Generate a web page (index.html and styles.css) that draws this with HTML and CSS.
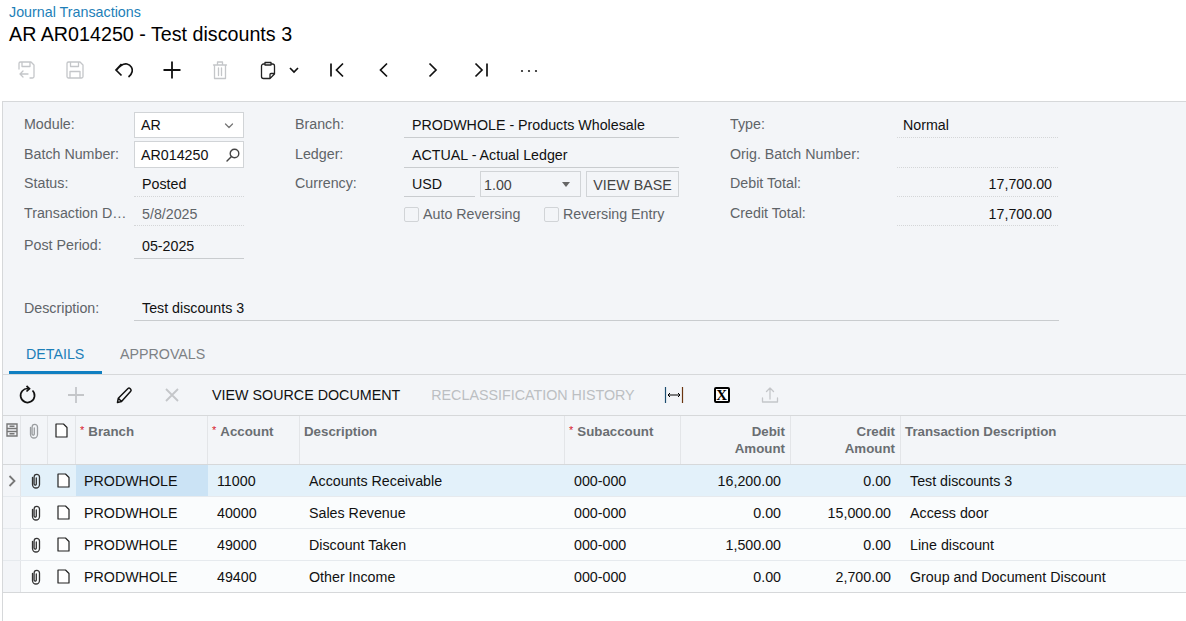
FILE: index.html
```html
<!DOCTYPE html>
<html lang="en">
<head>
<meta charset="utf-8">
<title>Journal Transactions</title>
<link rel="stylesheet" href="styles.css">
</head>
<body>
<header class="head">
  <a class="crumb">Journal Transactions</a>
  <h1 class="title">AR AR014250 - Test discounts 3</h1>
</header>
<nav class="maintools">
  <span class="mt w-1"><svg width="20" height="20" viewBox="0 0 20 20" class="ico dis"><path d="M2 9V3.500A1.500 1.500 0 0 1 3.500 2H14l3 3v11.500a1.500 1.500 0 0 1-1.500 1.500H13M5 2v4.500h8V2M3 14h8M6 11l-3 3 3 3"/></svg></span>
  <span class="mt w-2"><svg width="20" height="20" viewBox="0 0 20 20" class="ico dis"><path d="M2 3.500A1.500 1.500 0 0 1 3.500 2H15l3 3v11.500a1.500 1.500 0 0 1-1.500 1.500h-13A1.500 1.500 0 0 1 2 16.500ZM5.500 2v4.500h8V2M5 18v-6.500h10V18"/></svg></span>
  <span class="mt w-3"><svg width="20" height="20" viewBox="0 0 20 20" class="ico nav"><path d="M8.500 4 3 10l5.500 5.500M3.500 10C7 5.500 11 3.500 14 4c4 .8 6 5 5 8-.5 2-2 4-3.500 5"/></svg></span>
  <span class="mt w-4"><svg width="20" height="20" viewBox="0 0 20 20" class="ico bold"><path d="M10 1.500v17M1.500 10h17"/></svg></span>
  <span class="mt w-5"><svg width="20" height="20" viewBox="0 0 20 20" class="ico dis"><path d="M3.500 5h13M7.500 5V2h5v3M4.500 5v13.500h11V5M8.500 8v7.500M11.500 8v7.500"/></svg></span>
  <span class="mt w-6"><svg width="20" height="20" viewBox="0 0 20 20" class="ico clipb"><path d="M7 4H5.500A2 2 0 0 0 3.500 6v10.500a2 2 0 0 0 2 2H12l4.500-4.500V6a2 2 0 0 0-2-2H13M7 5V2.500h6V5ZM16.500 13.500H13a1 1 0 0 0-1 1v4"/></svg></span>
  <span class="mt w-7"><svg width="10" height="10" viewBox="0 0 10 10" class="ico nav"><path d="M1 3 5 7l4-4"/></svg></span>
  <span class="mt w-8"><svg width="20" height="20" viewBox="0 0 20 20" class="ico nav"><path d="M4 3.500v13M16 3.500 9.500 10l6.500 6.500"/></svg></span>
  <span class="mt w-9"><svg width="20" height="20" viewBox="0 0 20 20" class="ico nav"><path d="M13 3.500 6.500 10l6.500 6.500"/></svg></span>
  <span class="mt w-9b"><svg width="20" height="20" viewBox="0 0 20 20" class="ico nav"><path d="M6.500 3.500 13 10l-6.500 6.500"/></svg></span>
  <span class="mt w-10"><svg width="20" height="20" viewBox="0 0 20 20" class="ico nav"><path d="M16 3.500v13M4.500 3.500 11 10l-6.500 6.500"/></svg></span>
  <span class="mt w-11"><svg width="20" height="20" viewBox="0 0 20 20" class="dots"><circle cx="3" cy="11" r="1.100"/><circle cx="10" cy="11" r="1.100"/><circle cx="17" cy="11" r="1.100"/></svg></span>
</nav>
<main class="panel">
  <section class="form">
    <div class="col col-a">
      <div class="row"><label class="lbl">Module:</label><div class="box sel">AR<svg width="10" height="10" viewBox="0 0 10 10" class="ico grey"><path d="M1.500 3 5 6.500 8.500 3"/></svg></div></div>
      <div class="row"><label class="lbl">Batch Number:</label><div class="box sel tall">AR014250<svg width="16" height="16" viewBox="0 0 16 16" class="ico dark"><circle cx="9.500" cy="6.500" r="4.300"/><path d="M6.500 9.500 2 14"/></svg></div></div>
      <div class="row"><label class="lbl">Status:</label><div class="val dot">Posted</div></div>
      <div class="row"><label class="lbl">Transaction D…</label><div class="val dot muted">5/8/2025</div></div>
      <div class="row"><label class="lbl">Post Period:</label><div class="val solid">05-2025</div></div>
    </div>
    <div class="col col-b">
      <div class="row"><label class="lbl">Branch:</label><div class="val solid grow">PRODWHOLE - Products Wholesale</div></div>
      <div class="row"><label class="lbl">Ledger:</label><div class="val solid grow">ACTUAL - Actual Ledger</div></div>
      <div class="row"><label class="lbl">Currency:</label>
        <div class="cury">
          <div class="val solid usd">USD</div>
          <div class="box rate">1.00<span class="caret"></span></div>
          <div class="box viewbase">VIEW BASE</div>
        </div>
      </div>
      <div class="row"><span class="lbl"></span>
        <div class="checks">
          <span class="chk chk-a"><i class="cb"></i>Auto Reversing</span>
          <span class="chk"><i class="cb"></i>Reversing Entry</span>
        </div>
      </div>
    </div>
    <div class="col col-c">
      <div class="row"><label class="lbl">Type:</label><div class="val dot grow">Normal</div></div>
      <div class="row"><label class="lbl">Orig. Batch Number:</label><div class="val dot grow"></div></div>
      <div class="row"><label class="lbl">Debit Total:</label><div class="val dot grow num">17,700.00</div></div>
      <div class="row"><label class="lbl">Credit Total:</label><div class="val dot grow num">17,700.00</div></div>
    </div>
  </section>
  <div class="descrow"><label class="lbl">Description:</label><div class="val solid grow">Test discounts 3</div></div>
  <div class="tabs"><span class="tab active">DETAILS</span><span class="tab">APPROVALS</span></div>
  <div class="gridtools">
    <span class="gt g1"><svg width="20" height="20" viewBox="0 0 20 20" class="ico nav"><path d="M14.500 5.500A7 7 0 1 1 10 3.500M8.500 1l3 2.700-3 2.800"/></svg></span>
    <span class="gt g2"><svg width="20" height="20" viewBox="0 0 20 20" class="ico dis thick"><path d="M10 2v16M2 10h16"/></svg></span>
    <span class="gt g3"><svg width="20" height="20" viewBox="0 0 20 20" class="ico pen"><path d="M3.500 17.500l.8-4.300L14 3.500a1.500 1.500 0 0 1 2 0l.7.7a1.500 1.500 0 0 1 0 2L7.500 16.500ZM4.300 13.200l3.200 3.300"/></svg></span>
    <span class="gt g4"><svg width="20" height="20" viewBox="0 0 20 20" class="ico dis thick"><path d="M4 4l12 12M16 4 4 16"/></svg></span>
    <span class="gt g5">VIEW SOURCE DOCUMENT</span>
    <span class="gt g6">RECLASSIFICATION HISTORY</span>
    <span class="gt g7"><svg width="20" height="20" viewBox="0 0 20 20"><path d="M1.500 2v16" stroke="#1c4d70" stroke-width="1.200" fill="none"/><path d="M18.500 2v16" stroke="#6b3510" stroke-width="1.200" fill="none"/><path d="M4 10h12M6 8l-2 2 2 2M14 8l2 2-2 2" stroke="#000" fill="none"/></svg></span>
    <span class="gt g8 xl">X</span>
    <span class="gt g9"><svg width="20" height="20" viewBox="0 0 20 20" class="ico dis"><path d="M10 14V3M6.500 6.500 10 3l3.500 3.500M2.500 13v4h15v-4"/></svg></span>
  </div>
  <div class="grid">
    <div class="tr th">
      <div class="c c0"><svg width="12" height="14" viewBox="0 0 12 14" class="thico"><path d="M1 1h10v12H1ZM1 5.500h10M1 8.500h10M3.500 3.200h5M3.500 10.800h5"/></svg></div>
      <div class="c c1"><svg width="12" height="16" viewBox="0 0 12 16" class="clip lite"><path d="M2.500 4.500v7a3.500 3.500 0 0 0 7 0V4a2.700 2.700 0 0 0-5.400 0v7a1.100 1.100 0 0 0 2.200 0V5"/></svg></div>
      <div class="c c2"><svg width="13" height="15" viewBox="0 0 13 15" class="pg"><path d="M1 1h7.500L12 4.500V14H1Z"/></svg></div>
      <div class="c c3"><b class="req">*</b>Branch</div>
      <div class="c c4"><b class="req">*</b>Account</div>
      <div class="c c5">Description</div>
      <div class="c c6"><b class="req">*</b>Subaccount</div>
      <div class="c c7 r">Debit<br>Amount</div>
      <div class="c c8 r">Credit<br>Amount</div>
      <div class="c c9">Transaction Description</div>
    </div>
    <div class="tr td sel-row">
      <div class="c c0"><svg width="8" height="12" viewBox="0 0 8 12" class="arrow"><path d="M1.500 1 6.500 6l-5 5"/></svg></div>
      <div class="c c1"><svg width="12" height="16" viewBox="0 0 12 16" class="clip"><path d="M2.500 4.500v7a3.500 3.500 0 0 0 7 0V4a2.700 2.700 0 0 0-5.400 0v7a1.100 1.100 0 0 0 2.200 0V5"/></svg></div>
      <div class="c c2"><svg width="13" height="15" viewBox="0 0 13 15" class="pg"><path d="M1 1h7.500L12 4.500V14H1Z"/></svg></div>
      <div class="c c3 cur">PRODWHOLE</div><div class="c c4">11000</div><div class="c c5">Accounts Receivable</div><div class="c c6">000-000</div><div class="c c7 r">16,200.00</div><div class="c c8 r">0.00</div><div class="c c9">Test discounts 3</div>
    </div>
    <div class="tr td">
      <div class="c c0"></div>
      <div class="c c1"><svg width="12" height="16" viewBox="0 0 12 16" class="clip"><path d="M2.500 4.500v7a3.500 3.500 0 0 0 7 0V4a2.700 2.700 0 0 0-5.400 0v7a1.100 1.100 0 0 0 2.200 0V5"/></svg></div>
      <div class="c c2"><svg width="13" height="15" viewBox="0 0 13 15" class="pg"><path d="M1 1h7.500L12 4.500V14H1Z"/></svg></div>
      <div class="c c3">PRODWHOLE</div><div class="c c4">40000</div><div class="c c5">Sales Revenue</div><div class="c c6">000-000</div><div class="c c7 r">0.00</div><div class="c c8 r">15,000.00</div><div class="c c9">Access door</div>
    </div>
    <div class="tr td">
      <div class="c c0"></div>
      <div class="c c1"><svg width="12" height="16" viewBox="0 0 12 16" class="clip"><path d="M2.500 4.500v7a3.500 3.500 0 0 0 7 0V4a2.700 2.700 0 0 0-5.400 0v7a1.100 1.100 0 0 0 2.200 0V5"/></svg></div>
      <div class="c c2"><svg width="13" height="15" viewBox="0 0 13 15" class="pg"><path d="M1 1h7.500L12 4.500V14H1Z"/></svg></div>
      <div class="c c3">PRODWHOLE</div><div class="c c4">49000</div><div class="c c5">Discount Taken</div><div class="c c6">000-000</div><div class="c c7 r">1,500.00</div><div class="c c8 r">0.00</div><div class="c c9">Line discount</div>
    </div>
    <div class="tr td last">
      <div class="c c0"></div>
      <div class="c c1"><svg width="12" height="16" viewBox="0 0 12 16" class="clip"><path d="M2.500 4.500v7a3.500 3.500 0 0 0 7 0V4a2.700 2.700 0 0 0-5.400 0v7a1.100 1.100 0 0 0 2.200 0V5"/></svg></div>
      <div class="c c2"><svg width="13" height="15" viewBox="0 0 13 15" class="pg"><path d="M1 1h7.500L12 4.500V14H1Z"/></svg></div>
      <div class="c c3">PRODWHOLE</div><div class="c c4">49400</div><div class="c c5">Other Income</div><div class="c c6">000-000</div><div class="c c7 r">0.00</div><div class="c c8 r">2,700.00</div><div class="c c9">Group and Document Discount</div>
    </div>
  </div>
</main>
</body>
</html>
```
FILE: styles.css
```css
* { box-sizing: border-box; }
html, body { margin: 0; height: 100%; overflow: hidden; }
body { background: #fff; color: #000; font: 14.25px/16px "Liberation Sans", Arial, sans-serif; width: 1186px; height: 621px; }

.head { padding: 4px 9px 0; height: 46px; }
.crumb { display: block; color: #1d7fb8; font-size: 14.3px; line-height: 16px; }
.title { margin: 2px 0 0; font-weight: 400; font-size: 19.7px; line-height: 24px; }

.maintools { display: flex; align-items: center; height: 55px; padding: 0 0 7px 17px; }
.mt { display: flex; align-items: center; justify-content: center; flex: none; width: 20px; }
.w-1 { margin-right: 28px; }
.w-2 { margin-right: 28px; }
.w-3 { margin-right: 29px; }
.w-4 { margin-right: 28px; }
.w-5 { margin-right: 28px; }
.w-6 { margin-right: 11px; }
.w-7 { width: 10px; margin-right: 28px; }
.w-8 { margin-right: 27px; }
.w-9 { margin-right: 29px; }
.w-9b { margin-right: 28px; }
.w-10 { margin-right: 28px; }

.ico { fill: none; stroke: #111; stroke-width: 1.300; stroke-linecap: round; stroke-linejoin: round; }
.ico.bold { stroke-width: 1.800; stroke-linecap: butt; }
.ico.nav { stroke-width: 1.700; stroke-linecap: butt; stroke-linejoin: miter; }
.ico.clipb { stroke: #222; stroke-width: 1.300; }
.ico.pen { stroke-width: 1.500; }
.ico.dis { stroke: #c4c6c9; stroke-width: 1.300; }
.ico.dis.thick { stroke-width: 1.800; stroke-linecap: butt; }
.ico.grey { stroke: #777; flex: none; }
.ico.dark { stroke: #444; stroke-width: 1.400; flex: none; }
.dots { fill: #222; }

.panel { margin-left: 2px; height: 520px; border-top: 1px solid #d6d8da; border-left: 1px solid #d6d8da; background: #f3f5f8; }

.form { display: flex; padding: 7px 0 0 21px; height: 195px; }
.col { display: grid; grid-template-rows: 29px 30px 29px 29px 33px; align-content: start; }
.col-a { width: 220px; margin-right: 51px; }
.col-b { width: 384px; margin-right: 51px; }
.col-c { width: 328px; }
.row { display: flex; align-items: flex-end; min-width: 0; }
.lbl { flex: none; width: 110px; color: #5f6468; line-height: 16px; padding-bottom: 6px; align-self: flex-end; white-space: nowrap; overflow: hidden; }
.row:nth-child(4) .lbl { padding-bottom: 5px; }
.col-b .lbl { width: 109px; }
.col-c .lbl { width: 167px; }
.val { width: 110px; height: 26px; padding: 5px 6px 0 8px; color: #111; white-space: nowrap; flex: none; }
.row:nth-child(4) .val { padding-top: 6px; }
.col-c .val { padding-left: 6px; padding-right: 6px; }
.val.grow { flex: 1; width: auto; min-width: 0; }
.val.muted { color: #5f6468; }
.val.dot { border-bottom: 1px dotted #d4d6d8; }
.val.solid { border-bottom: 1px solid #c9cccf; }
.val.num { text-align: right; }
.box { background: #fff; border: 1px solid #d1d4d7; height: 26px; padding: 4px 6px; color: #111; display: flex; justify-content: space-between; align-items: flex-start; flex: none; }
.sel { width: 110px; }
.sel .ico.grey { margin: 4px 3px 0 0; }
.sel.tall { height: 27px; padding: 5px 2px 0 6px; }

.cury { display: flex; align-items: flex-end; flex: 1; gap: 5px; }
.usd { width: 71px; }
.rate { width: 101px; background: transparent; color: #444; padding: 5px 6px 0 3px; }
.caret { width: 0; height: 0; border-left: 4px solid transparent; border-right: 4px solid transparent; border-top: 5px solid #666; margin: 5px 4px 0 0; }
.viewbase { width: 93px; background: transparent; color: #444; justify-content: center; padding: 5px 0 0; }
.checks { display: flex; height: 28px; padding-top: 8px; }
.chk { display: flex; align-items: center; height: 16px; color: #5f6468; }
.chk-a { width: 140px; }
.cb { width: 15px; height: 15px; border: 1px solid #d1d4d7; border-radius: 2px; background: #f3f5f8; margin-right: 4px; }

.descrow { display: flex; padding-left: 21px; width: 1056px; height: 24px; align-items: flex-end; }
.descrow .lbl { padding-bottom: 5px; }
.descrow .val { height: 24px; padding-top: 3px; }

.tabs { display: flex; height: 54px; padding: 19px 0 0 6px; border-bottom: 1px solid #d6d8da; }
.tab { display: block; padding: 6px 17px 0; height: 34px; color: #7d8185; }
.tab.active { color: #1d7fb8; border-bottom: 3px solid #0f7fc1; width: 93px; }
.tab + .tab { padding-left: 18px; }

.gridtools { display: flex; align-items: center; height: 41px; border-bottom: 1px solid #d6d8da; font-size: 14.3px; }
.gt { flex: none; display: flex; align-items: center; justify-content: center; color: #111; white-space: nowrap; }
.g1 { margin-left: 15px; width: 20px; }
.g2 { margin-left: 28px; width: 20px; }
.g3 { margin-left: 28px; width: 20px; }
.g4 { margin-left: 28px; width: 20px; }
.g5 { margin-left: 30px; }
.g6 { margin-left: 31px; color: #bcbfc2; }
.g7 { margin-left: 29px; width: 20px; }
.g8 { margin-left: 30px; }
.g9 { margin-left: 30px; width: 20px; }
.xl { width: 16px; height: 16px; border: 2px solid #000; border-radius: 2px; background: #fff; color: #000; font: 700 15px/12px "Liberation Serif", serif; }

.grid { background: #fff; height: 206px; }
.tr { display: grid; grid-template-columns: 18px 27px 28px 132px 92px 265px 116px 110px 110px 285px; width: 1183px; }
.c { min-width: 0; white-space: nowrap; overflow: hidden; }
.th { height: 49px; background: #f3f5f8; border-bottom: 1px solid #d6d8da; color: #6a6e72; font-weight: 700; font-size: 13.3px; line-height: 17px; }
.th .c { padding: 7px 5px 0 4px; border-right: 1px solid #e3e5e8; }
.th .c0, .th .c1, .th .c2 { padding: 7px 0 0; display: flex; justify-content: center; align-items: flex-start; }
.th .c9 { border-right: 0; }
.req { color: #d8162c; font-weight: 400; font-size: 11px; line-height: 0; margin-right: 4px; vertical-align: 2px; }
.td { height: 32px; background: #fafcfd; border-bottom: 1px solid #e6eaee; line-height: 32px; color: #111; }
.td.last { border-bottom: 1px solid #d6d8da; }
.td .c { padding-left: 9px; }
.td .c0 { background: #f3f5f8; padding: 0; border-right: 1px solid #e3e5e8; display: flex; justify-content: center; align-items: center; }
.td .c1, .td .c2 { padding: 0; display: flex; justify-content: center; align-items: center; }
.td .c1 { padding-left: 3px; }
.td .c2 { padding-left: 3px; }
.td .c3 { padding-left: 8px; }
.td .c7, .td .c8 { padding-left: 0; padding-right: 10px; }
.r { text-align: right; }
.sel-row { background: #e3f1fa; }
.sel-row .cur { background: #cbe3f5; }
.thico { fill: none; stroke: #777; stroke-width: 1.400; }
.pg { fill: #fff; stroke: #222; stroke-width: 1.200; stroke-linejoin: round; }
.clip { fill: none; stroke: #333; stroke-width: 1.300; stroke-linecap: round; }
.clip.lite { stroke: #9a9da0; }
.arrow { fill: none; stroke: #777; stroke-width: 1.800; }
```
